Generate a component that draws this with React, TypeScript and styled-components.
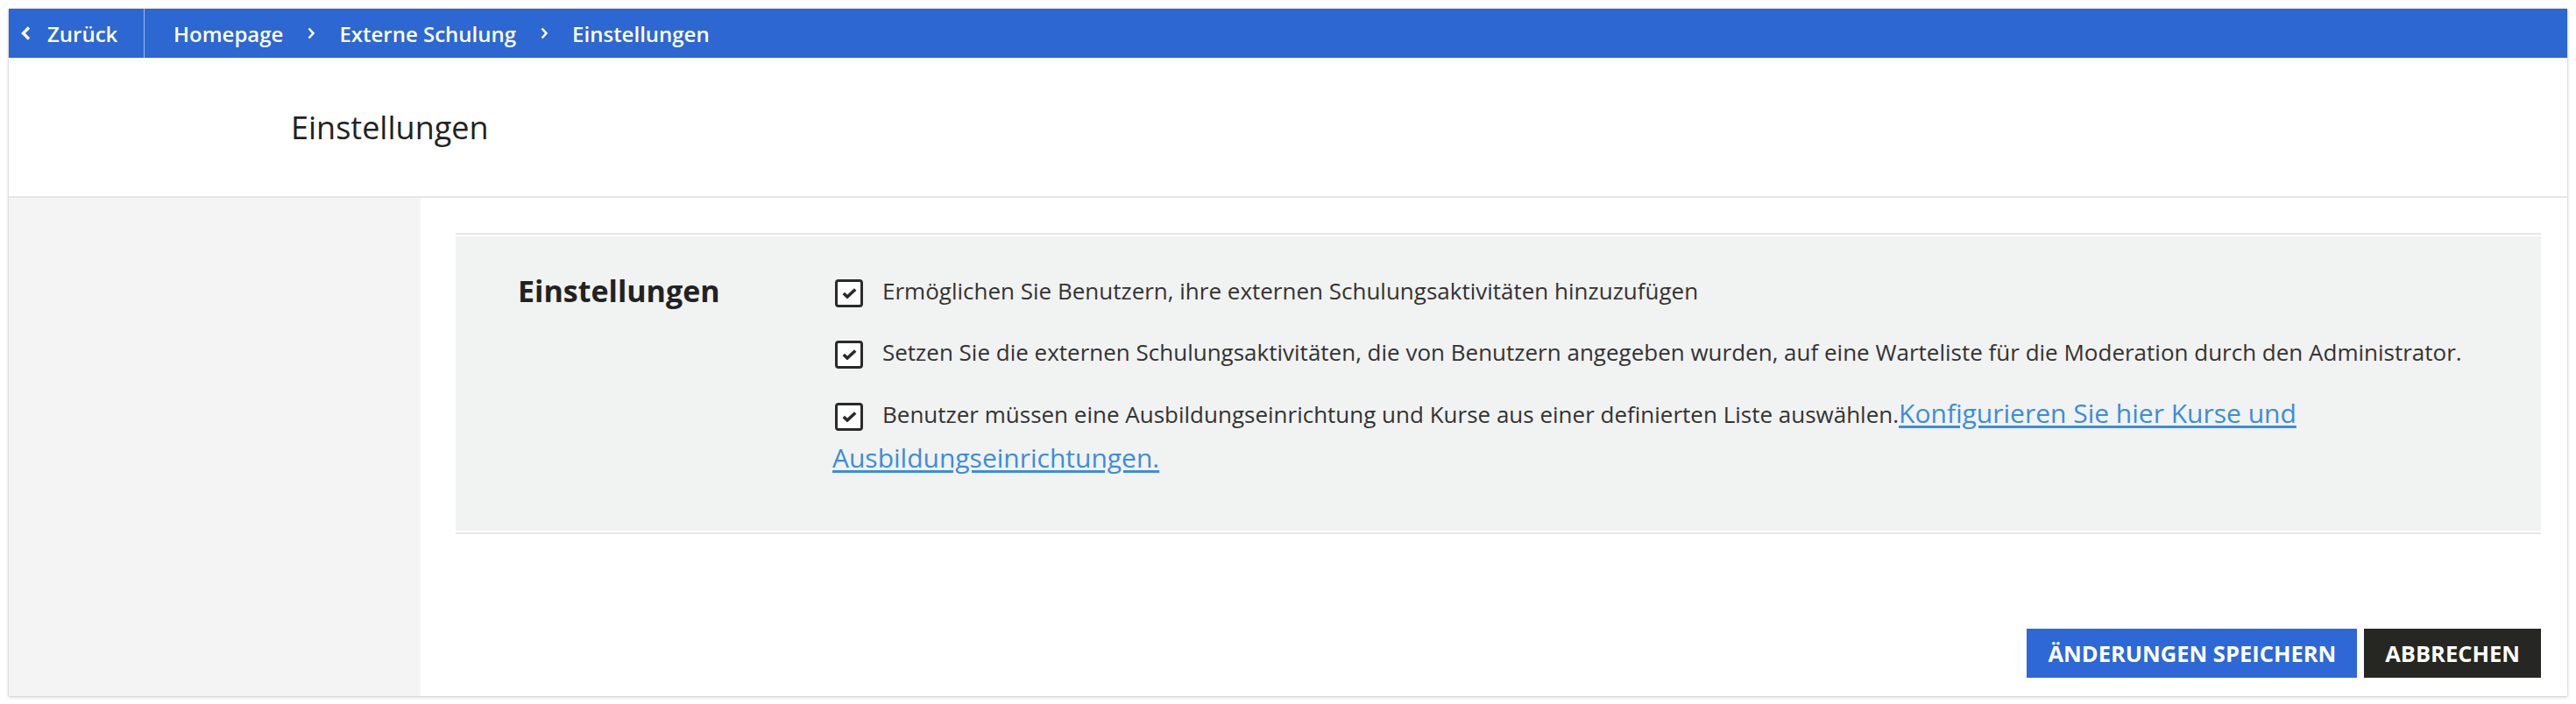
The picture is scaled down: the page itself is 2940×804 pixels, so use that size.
import React from "react";
import styled, { createGlobalStyle } from "styled-components";

const GlobalStyle = createGlobalStyle`
  html, body { margin: 0; padding: 0; background: #ffffff; }
  body { font-family: "Open Sans", "Noto Sans", sans-serif; }
  * { box-sizing: border-box; }
`;

const Page = styled.div`
  padding: 10px 10px 11px 10px;
`;

const Card = styled.div`
  display: flex;
  flex-direction: column;
  background: #ffffff;
  box-shadow: 0 0 1px rgba(0, 0, 0, 0.35), 0 1px 4px rgba(0, 0, 0, 0.18);
`;

const TopBar = styled.nav`
  display: flex;
  align-items: stretch;
  height: 56px;
  background: #2c67d2;
  color: #ffffff;
  font-size: 24px;
  font-weight: 600;
`;

const BackLink = styled.a`
  display: flex;
  align-items: center;
  gap: 19px;
  width: 155px;
  padding-left: 13px;
  border-right: 1px solid rgba(255, 255, 255, 0.55);
  color: #ffffff;
  text-decoration: none;
`;

const Crumbs = styled.ol`
  display: flex;
  align-items: center;
  gap: 27px;
  margin: 0;
  padding: 0 0 0 33px;
  list-style: none;
`;

const Crumb = styled.li`
  display: flex;
  align-items: center;
`;

const Header = styled.header`
  display: flex;
  align-items: center;
  height: 160px;
  padding-left: 322px;
  border-bottom: 2px solid #e6e6e6;
`;

const Title = styled.h1`
  margin: 0;
  font-size: 36px;
  font-weight: 400;
  color: #222222;
`;

const Body = styled.div`
  display: flex;
`;

const Sidebar = styled.aside`
  width: 470px;
  background: #f4f4f4;
`;

const Main = styled.main`
  flex: 1;
  padding: 40px 30px 21px 40px;
`;

const Panel = styled.section`
  border-top: 2px solid #e6e6e6;
  border-bottom: 2px solid #e6e6e6;
`;

const PanelBody = styled.div`
  margin: 2px 0;
  background: #f1f2f2;
  display: grid;
  grid-template-columns: 359px 1fr;
  padding: 37px 40px 57px 71px;
`;

const SectionLabel = styled.h2`
  margin: 0;
  font-size: 34px;
  font-weight: 700;
  line-height: 50px;
  color: #222222;
`;

const Options = styled.div`
  display: flex;
  flex-direction: column;
  gap: 20px;
`;

const Option = styled.label`
  display: block;
  font-size: 26px;
  line-height: 50px;
  color: #333333;
`;

const Box = styled.span`
  display: inline-flex;
  align-items: center;
  justify-content: center;
  width: 32px;
  height: 32px;
  margin: 0 22px 0 3px;
  vertical-align: middle;
  border: 3.5px solid #2a2a2a;
  border-radius: 4px;
  background: #ffffff;
`;

const Link = styled.a`
  font-size: 30px;
  color: #3b8ddb;
  text-decoration: underline;
  text-underline-offset: 3px;
`;

const Footer = styled.div`
  display: flex;
  justify-content: flex-end;
  gap: 8px;
  margin-top: 108px;
`;

const Button = styled.button<{ $tone: "primary" | "dark" }>`
  height: 56px;
  padding: 0 24px;
  border: none;
  font-family: "Open Sans", "Noto Sans", sans-serif;
  font-size: 25.5px;
  font-weight: 700;
  color: #ffffff;
  text-transform: uppercase;
  background: ${(p) => (p.$tone === "primary" ? "#2d68d6" : "#262723")};
`;

const BackChevron = () => (
  <svg width="12" height="16" viewBox="0 0 12 16">
    <path d="M10 1.5 L3.5 8 L10 14.5" fill="none" stroke="#fff" strokeWidth="3.4" />
  </svg>
);

const Sep = () => (
  <svg width="10" height="14" viewBox="0 0 10 14">
    <path d="M2.5 1.5 L7.5 7 L2.5 12.5" fill="none" stroke="#fff" strokeWidth="2.6" />
  </svg>
);

const Check = () => (
  <svg width="17" height="12" viewBox="0 0 17 12">
    <path d="M1.8 6 L6 10 L15.2 1.5" fill="none" stroke="#2a2a2a" strokeWidth="3.6" />
  </svg>
);

const crumbs = ["Homepage", "Externe Schulung", "Einstellungen"];

export default function App() {
  return (
    <>
      <GlobalStyle />
      <Page>
        <Card>
          <TopBar>
            <BackLink href="#">
              <BackChevron />
              Zurück
            </BackLink>
            <Crumbs>
              {crumbs.map((c, i) => (
                <React.Fragment key={c}>
                  {i > 0 && (
                    <Crumb aria-hidden>
                      <Sep />
                    </Crumb>
                  )}
                  <Crumb>{c}</Crumb>
                </React.Fragment>
              ))}
            </Crumbs>
          </TopBar>
          <Header>
            <Title>Einstellungen</Title>
          </Header>
          <Body>
            <Sidebar />
            <Main>
              <Panel>
                <PanelBody>
                  <SectionLabel>Einstellungen</SectionLabel>
                  <Options>
                    <Option>
                      <Box>
                        <Check />
                      </Box>
                      Ermöglichen Sie Benutzern, ihre externen Schulungsaktivitäten hinzuzufügen
                    </Option>
                    <Option>
                      <Box>
                        <Check />
                      </Box>
                      Setzen Sie die externen Schulungsaktivitäten, die von Benutzern angegeben wurden, auf eine Warteliste für die Moderation durch den Administrator.
                    </Option>
                    <Option>
                      <Box>
                        <Check />
                      </Box>
                      Benutzer müssen eine Ausbildungseinrichtung und Kurse aus einer definierten Liste auswählen.
                      <Link href="#">Konfigurieren Sie hier Kurse und Ausbildungseinrichtungen.</Link>
                    </Option>
                  </Options>
                </PanelBody>
              </Panel>
              <Footer>
                <Button $tone="primary">Änderungen speichern</Button>
                <Button $tone="dark">Abbrechen</Button>
              </Footer>
            </Main>
          </Body>
        </Card>
      </Page>
    </>
  );
}
